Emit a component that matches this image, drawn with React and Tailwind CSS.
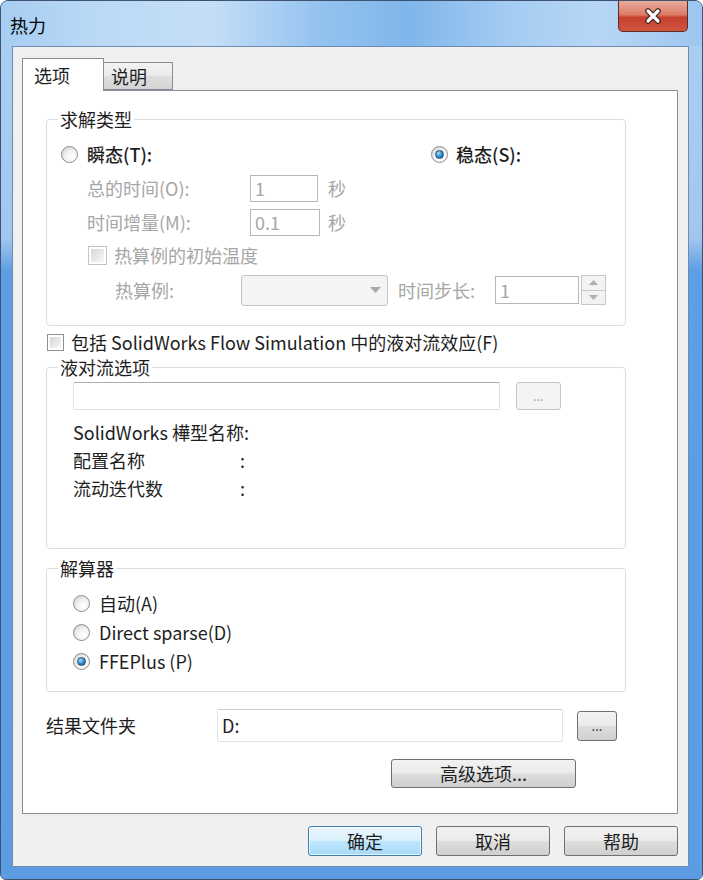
import React from 'react';

// ── Win7 style controls ─────────────────────────────────────────────────────
const Radio = ({ checked }) => (
  <span className="flex h-[17px] w-[17px] shrink-0 items-center justify-center rounded-full border border-[#8c8c8c] bg-[radial-gradient(circle_at_65%_70%,#ffffff_0%,#f2f2f2_45%,#c9c9c9_100%)]">
    {checked && (
      <span className="h-[9px] w-[9px] rounded-full border border-[#1c5180] bg-[radial-gradient(circle_at_35%_30%,#a6ddfa_0%,#3b8dcc_50%,#14558c_100%)]" />
    )}
  </span>
);

const Check = ({ disabled }) => (
  <span
    className={
      disabled
        ? 'flex h-[19px] w-[19px] shrink-0 border border-[#c2c2c2] bg-white p-[2px]'
        : 'flex h-[17px] w-[17px] shrink-0 border border-[#8f8f8f] bg-white p-[2px]'
    }
  >
    <span className="flex-1 bg-linear-to-br from-[#d6d6d6] to-[#f8f8f8]" />
  </span>
);

const Group = ({ title, className, children }) => (
  <fieldset className={`w-[580px] rounded-[4px] border border-[#d5dfe5] ${className}`}>
    <legend className="ml-[11px] px-[2px] text-[18px] leading-[24px] text-[#1e1e1e]">{title}</legend>
    {children}
  </fieldset>
);

const Button = ({ children, className = '' }) => (
  <button
    className={`flex items-center justify-center rounded-[3px] border border-[#707070] bg-[linear-gradient(180deg,#f2f2f2_0%,#ebebeb_48%,#dddddd_52%,#cfcfcf_100%)] text-[18px] text-[#1e1e1e] ${className}`}
  >
    {children}
  </button>
);

const CloseGlyph = () => (
  <svg width="20" height="16" viewBox="0 0 20 16">
    <path d="M5 3 L15 13 M15 3 L5 13" stroke="#3a1e1a" strokeWidth="5.5" strokeLinecap="round" />
    <path d="M5 3 L15 13 M15 3 L5 13" stroke="#ffffff" strokeWidth="3.2" strokeLinecap="round" />
  </svg>
);

export default function App() {
  return (
    <div className="h-[880px] w-[703px] overflow-hidden bg-white font-['Noto_Sans_CJK_SC','Noto_Sans',sans-serif]">
      <div className="flex h-full flex-col overflow-hidden rounded-t-[8px] rounded-b-[6px] border border-[#3e5370] bg-[#5c9ce3]">
        {/* ── Title bar ── */}
        <div className="flex h-[45px] shrink-0 items-start justify-between bg-[#9cc6f0] bg-[linear-gradient(90deg,#a6cdf2_0%,#bcdaf6_15%,#c4def7_30%,#95c3ef_45%,#80b6eb_58%,#a3cbf2_72%,#b8d7f5_85%,#9cc6f0_100%)]">
          <span className="pl-[9px] pt-[10px] text-[18px] leading-[28px] text-black">热力</span>
          <div className="mr-[14px] flex h-[31px] w-[70px] items-center justify-center rounded-b-[5px] border border-t-0 border-[#5b2c24] bg-[#cf553f] bg-[linear-gradient(180deg,#e8ac9c_0%,#da7c68_45%,#c6402e_55%,#cf553f_100%)]">
            <CloseGlyph />
          </div>
        </div>

        {/* ── Frame body ── */}
        <div className="flex flex-1 flex-col bg-[#5c9ce3] bg-[linear-gradient(180deg,#aacdf2_0%,#a2c7ef_23%,#5e9ee4_27%,#5c9ce3_100%)]">
          {/* Client area */}
          <div className="ml-[11px] mr-[13px] flex flex-1 flex-col border border-[#6f8cb0] bg-[#f0f0f0] pl-[9px] pt-[11px]">
            {/* Tabs */}
            <div className="flex h-[32px] items-end">
              <div className="z-10 -mb-px flex h-[33px] w-[82px] items-center border border-b-0 border-[#898c95] bg-white pl-[11px] text-[18px] text-[#1e1e1e]">
                选项
              </div>
              <div className="flex h-[28px] w-[69px] items-center border border-l-0 border-[#898c95] bg-[linear-gradient(180deg,#f3f3f3_0%,#ebebeb_50%,#dedede_52%,#d4d4d4_100%)] pl-[7px] text-[18px] text-[#1e1e1e]">
                说明
              </div>
            </div>

            {/* Tab panel */}
            <div className="flex h-[724px] w-[656px] flex-col border border-[#898c95] bg-white pl-[23px] text-[18px] text-[#1e1e1e]">
              {/* 求解类型 */}
              <Group title="求解类型" className="mt-[16px] pb-[16px]">
                <div className="mt-[6px] flex h-[34px] items-center pl-[14px]">
                  <div className="flex w-[370px] items-center">
                    <Radio />
                    <span className="ml-[9px] font-medium">瞬态(T):</span>
                  </div>
                  <Radio checked />
                  <span className="ml-[8px] font-medium">稳态(S):</span>
                </div>
                <div className="flex h-[34px] items-center pl-[40px] text-[#a6a6a6]">
                  <span className="w-[163px]">总的时间(O):</span>
                  <div className="flex h-[27px] w-[68px] items-center border border-[#b7b7b7] pl-[4px]">1</div>
                  <span className="ml-[10px]">秒</span>
                </div>
                <div className="flex h-[34px] items-center pl-[40px] text-[#a6a6a6]">
                  <span className="w-[163px]">时间增量(M):</span>
                  <div className="flex h-[27px] w-[70px] items-center border border-[#b7b7b7] pl-[4px]">0.1</div>
                  <span className="ml-[8px]">秒</span>
                </div>
                <div className="flex h-[32px] items-center pl-[41px] text-[#a6a6a6]">
                  <Check disabled />
                  <span className="ml-[7px]">热算例的初始温度</span>
                </div>
                <div className="flex h-[38px] items-center pl-[68px] text-[#a6a6a6]">
                  <span className="w-[126px]">热算例:</span>
                  <div className="flex h-[31px] w-[147px] items-center justify-end rounded-[3px] border border-[#c3c3c3] bg-[#f4f4f4] pr-[6px]">
                    <svg width="11" height="7" viewBox="0 0 11 7">
                      <path d="M0 0 L11 0 L5.5 6 Z" fill="#a8a8a8" />
                    </svg>
                  </div>
                  <span className="ml-[10px] w-[97px]">时间步长:</span>
                  <div className="flex h-[28px] w-[84px] items-center border border-[#b7b7b7] pl-[4px]">1</div>
                  <div className="ml-[2px] flex h-[30px] w-[25px] flex-col">
                    <div className="flex flex-1 items-center justify-center border border-[#c8c8c8] bg-[#f3f3f3]">
                      <svg width="9" height="5" viewBox="0 0 9 5">
                        <path d="M0 5 L9 5 L4.5 0 Z" fill="#b0b0b0" />
                      </svg>
                    </div>
                    <div className="flex flex-1 items-center justify-center border border-t-0 border-[#c8c8c8] bg-[#f3f3f3]">
                      <svg width="9" height="5" viewBox="0 0 9 5">
                        <path d="M0 0 L9 0 L4.5 5 Z" fill="#b0b0b0" />
                      </svg>
                    </div>
                  </div>
                </div>
              </Group>

              {/* 包括 Flow Simulation */}
              <div className="mt-[4px] flex h-[24px] items-center pl-[1px]">
                <Check />
                <span className="ml-[7px]">包括 SolidWorks Flow Simulation 中的液对流效应(F)</span>
              </div>

              {/* 液对流选项 */}
              <Group title="液对流选项" className="mt-[1px] pb-[46px]">
                <div className="mt-[3px] flex items-center pl-[26px]">
                  <div className="h-[28px] w-[427px] rounded-[2px] border border-[#abadb3] border-b-[#dbdfe6] border-l-[#e2e3ea] border-r-[#dbdfe6]" />
                  <div className="ml-[16px] flex h-[28px] w-[45px] items-center justify-center rounded-[3px] border border-[#c4c4c4] bg-[#f4f4f4] text-[13px] text-[#a0a0a0]">
                    ...
                  </div>
                </div>
                <div className="mt-[8px] flex h-[28px] items-center pl-[26px]">SolidWorks 樺型名称:</div>
                <div className="flex h-[28px] items-center pl-[26px]">
                  <span className="w-[167px]">配置名称</span>
                  <span>:</span>
                </div>
                <div className="flex h-[28px] items-center pl-[26px]">
                  <span className="w-[167px]">流动迭代数</span>
                  <span>:</span>
                </div>
              </Group>

              {/* 解算器 */}
              <Group title="解算器" className="mt-[7px] pb-[15px]">
                <div className="mt-[9px] flex h-[29px] items-center pl-[26px]">
                  <Radio />
                  <span className="ml-[9px]">自动(A)</span>
                </div>
                <div className="flex h-[29px] items-center pl-[26px]">
                  <Radio />
                  <span className="ml-[9px]">Direct sparse(D)</span>
                </div>
                <div className="flex h-[29px] items-center pl-[26px]">
                  <Radio checked />
                  <span className="ml-[9px]">FFEPlus (P)</span>
                </div>
              </Group>

              {/* 结果文件夹 */}
              <div className="mt-[17px] flex h-[33px] items-center">
                <span className="w-[171px]">结果文件夹</span>
                <div className="flex h-[33px] w-[346px] items-center rounded-[2px] border border-[#dfe3ea] border-t-[#c9ced6] pl-[4px]">D:</div>
                <Button className="ml-[14px] h-[30px] w-[40px] !text-[13px]">...</Button>
              </div>

              <Button className="ml-[345px] mt-[17px] h-[29px] w-[185px]">高级选项...</Button>
            </div>

            {/* Footer buttons */}
            <div className="mt-[12px] flex w-[656px] justify-end gap-[14px]">
              <button className="flex h-[30px] w-[114px] items-center justify-center rounded-[3px] border border-[#3c7fb1] bg-[linear-gradient(180deg,#eaf6fd_0%,#d9f0fc_48%,#bee6fd_52%,#a7d9f5_100%)] text-[18px] text-[#1e1e1e] shadow-[inset_0_0_0_1px_#ffffffb3]">
                确定
              </button>
              <Button className="h-[30px] w-[114px]">取消</Button>
              <Button className="h-[30px] w-[114px]">帮助</Button>
            </div>
          </div>

          <div className="h-[12px] shrink-0" />
        </div>
      </div>
    </div>
  );
}
